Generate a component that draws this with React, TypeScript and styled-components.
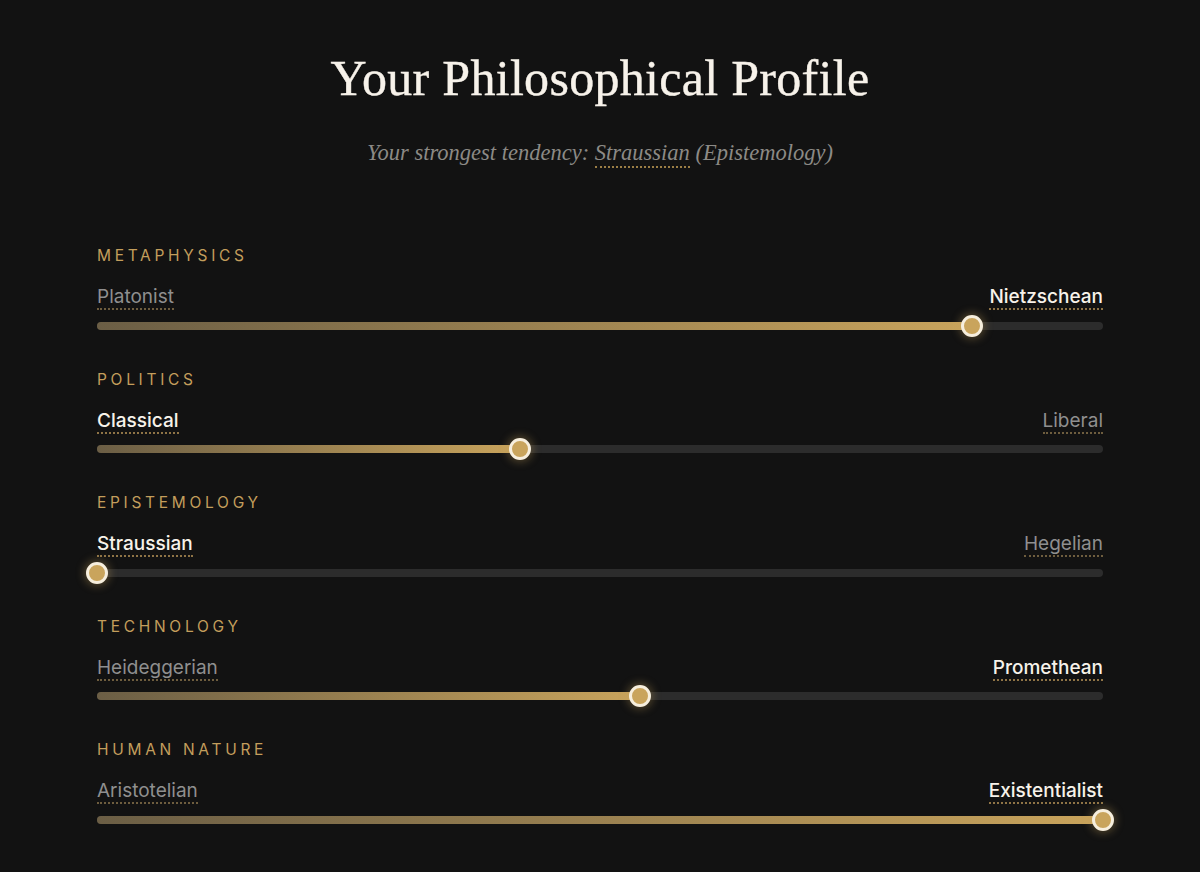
import React from 'react';
import styled, { createGlobalStyle } from 'styled-components';

const GlobalStyle = createGlobalStyle`
  html, body {
    margin: 0;
    padding: 0;
    background: #121212;
  }
  body {
    font-family: 'Inter', 'Liberation Sans', sans-serif;
    -webkit-font-smoothing: antialiased;
  }
`;

const StyledPage = styled.div`
  min-height: 872px;
  box-sizing: border-box;
  padding: 48px 97px 40px;
  background: #121212;
`;

const StyledHeader = styled.header`
  display: flex;
  flex-direction: column;
  align-items: center;
  margin-bottom: 77px;
`;

const StyledTitle = styled.h1`
  margin: 0;
  font-family: 'Liberation Serif', 'DejaVu Serif', serif;
  font-weight: 400;
  font-size: 50px;
  line-height: 60px;
  color: #f7f2ea;
  letter-spacing: 0.3px;
  -webkit-text-stroke: 0.4px #f7f2ea;
`;

const StyledSubtitle = styled.p`
  margin: 29px 0 0;
  font-family: 'Liberation Serif', 'DejaVu Serif', serif;
  font-style: italic;
  font-size: 22.5px;
  line-height: 32px;
  color: #8c8a86;
`;

const StyledEmphasis = styled.span`
  border-bottom: 2px dotted #9b7e45;
  padding-bottom: 1px;
`;

const StyledList = styled.div`
  display: flex;
  flex-direction: column;
  gap: 40px;
`;

const StyledAxis = styled.section`
  display: flex;
  flex-direction: column;
`;

const StyledCategory = styled.div`
  font-size: 15.5px;
  line-height: 20px;
  letter-spacing: 3.7px;
  text-transform: uppercase;
  color: #c39e5c;
  margin-bottom: 20px;
`;

const StyledPoles = styled.div`
  display: flex;
  justify-content: space-between;
  align-items: flex-end;
  margin-bottom: 11.5px;
`;

const StyledPole = styled.span<{ $active: boolean }>`
  font-size: 19px;
  line-height: 22px;
  font-weight: ${(p) => (p.$active ? 500 : 400)};
  color: ${(p) => (p.$active ? '#f7f2ea' : '#8f8f8f')};
  border-bottom: 2px dotted ${(p) => (p.$active ? '#8f7446' : '#6e5d3e')};
`;

const StyledTrack = styled.div`
  position: relative;
  height: 8px;
  border-radius: 4px;
  background: #2c2c2c;
`;

const StyledFill = styled.div`
  height: 100%;
  border-radius: 4px;
  background: linear-gradient(90deg, #6b5e45 0%, #c9a45c 100%);
`;

const StyledThumb = styled.div`
  position: absolute;
  top: 50%;
  width: 16px;
  height: 16px;
  border-radius: 50%;
  background: #c9a45c;
  border: 3px solid #f6eedd;
  transform: translate(-50%, -50%);
  box-shadow: 0 0 8px 2px rgba(201, 164, 92, 0.35);
`;

interface Axis {
  category: string;
  left: string;
  right: string;
  value: number;
}

const axes: Axis[] = [
  { category: 'Metaphysics', left: 'Platonist', right: 'Nietzschean', value: 87 },
  { category: 'Politics', left: 'Classical', right: 'Liberal', value: 42 },
  { category: 'Epistemology', left: 'Straussian', right: 'Hegelian', value: 0 },
  { category: 'Technology', left: 'Heideggerian', right: 'Promethean', value: 54 },
  { category: 'Human Nature', left: 'Aristotelian', right: 'Existentialist', value: 100 },
];

const AxisRow = ({ axis }: { axis: Axis }) => {
  const leansRight = axis.value >= 50;
  return (
    <StyledAxis>
      <StyledCategory>{axis.category}</StyledCategory>
      <StyledPoles>
        <StyledPole $active={!leansRight}>{axis.left}</StyledPole>
        <StyledPole $active={leansRight}>{axis.right}</StyledPole>
      </StyledPoles>
      <StyledTrack>
        <StyledFill style={{ width: `${axis.value}%` }} />
        <StyledThumb style={{ left: `${axis.value}%` }} />
      </StyledTrack>
    </StyledAxis>
  );
};

const App = () => (
  <>
    <GlobalStyle />
    <StyledPage>
      <StyledHeader>
        <StyledTitle>Your Philosophical Profile</StyledTitle>
        <StyledSubtitle>
          Your strongest tendency: <StyledEmphasis>Straussian</StyledEmphasis> (Epistemology)
        </StyledSubtitle>
      </StyledHeader>
      <StyledList>
        {axes.map((a) => (
          <AxisRow key={a.category} axis={a} />
        ))}
      </StyledList>
    </StyledPage>
  </>
);

export default App;
